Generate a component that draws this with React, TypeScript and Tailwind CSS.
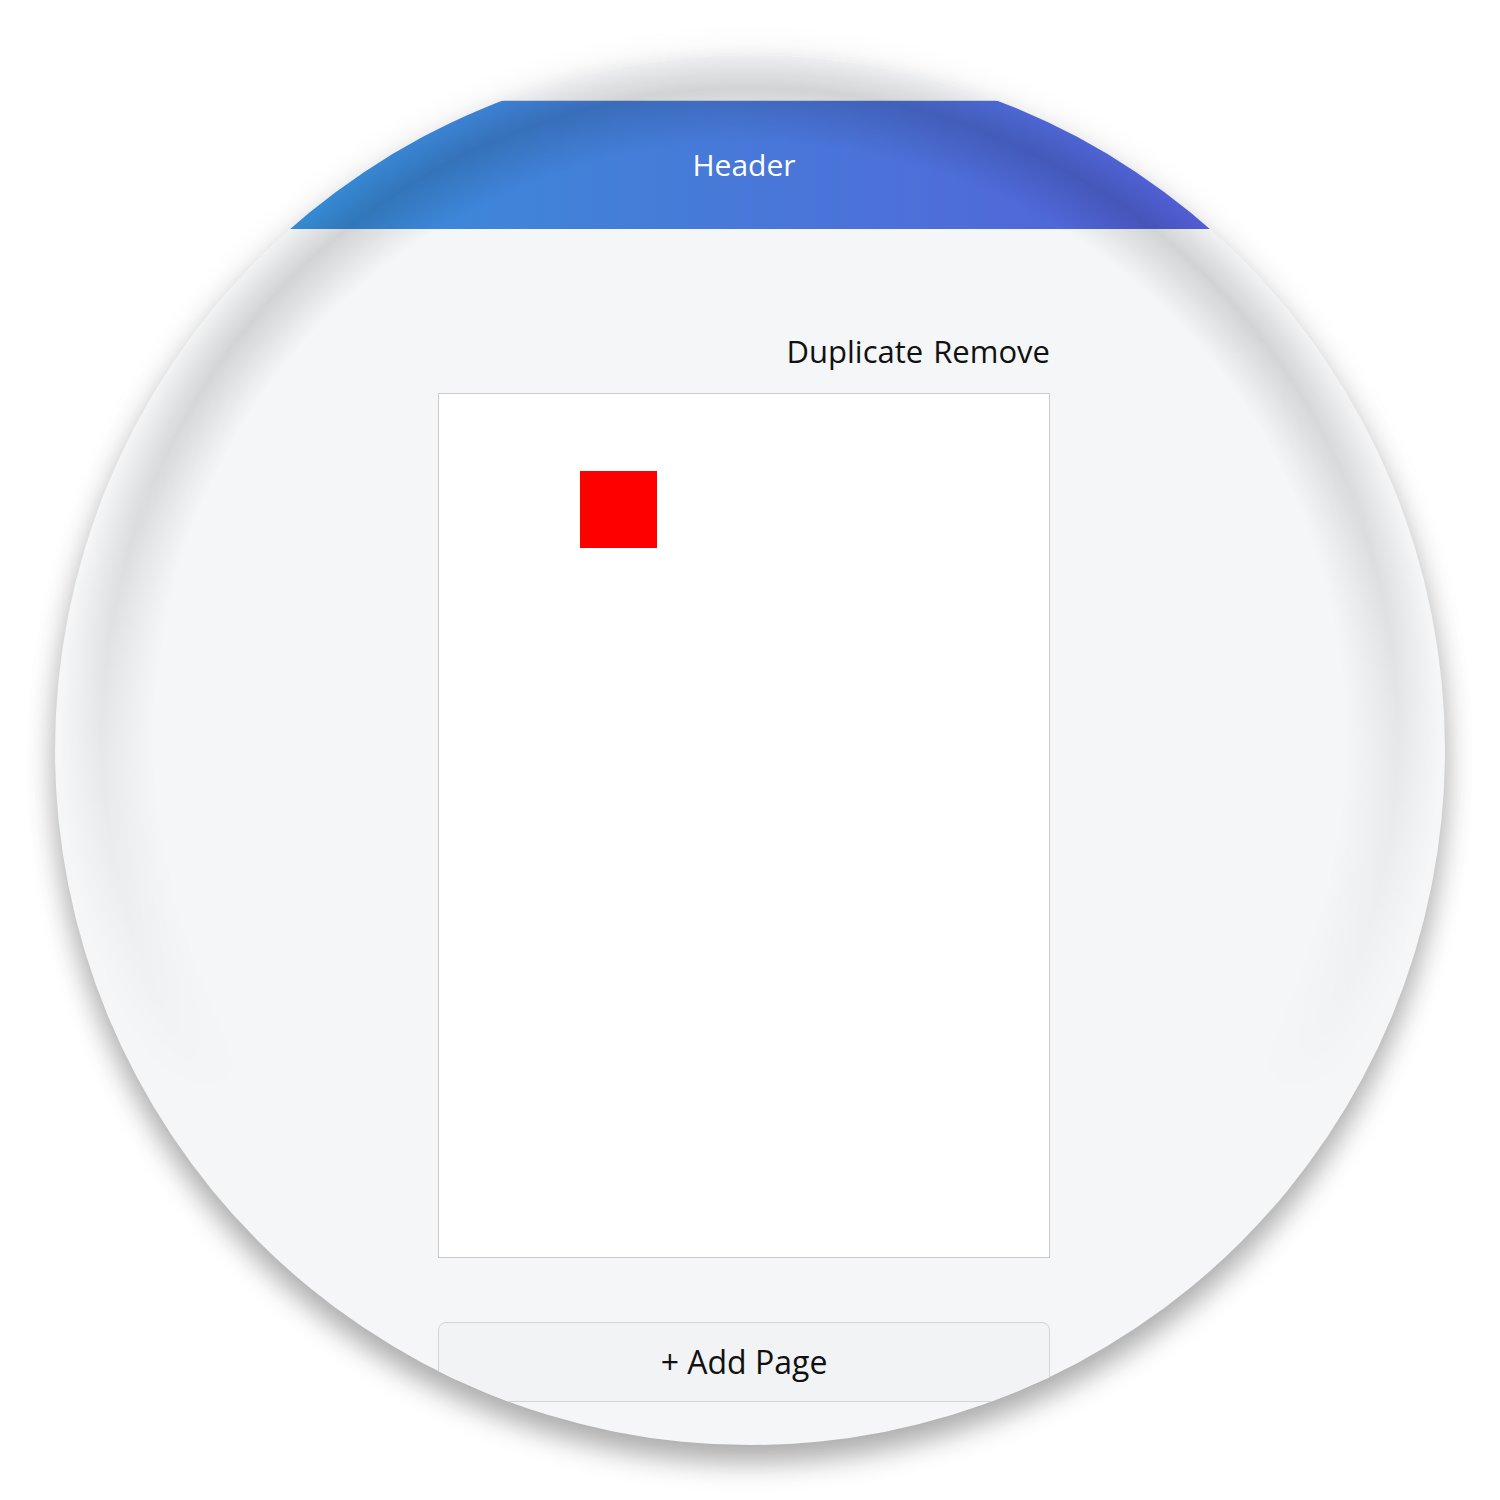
import React from "react";

export default function App() {
  return (
    <div className="w-[1500px] h-[1500px] bg-white pt-[55px] pl-[55px]" style={{ fontFamily: '"Open Sans", "Noto Sans", sans-serif' }}>
      <div className="relative w-[1390px] h-[1390px] rounded-full overflow-hidden bg-[#f5f6f8] shadow-[0_18px_28px_rgba(0,0,0,0.3),0_0_36px_rgba(0,0,0,0.07)]">
        <div className="w-[1378px] pt-[45px] flex flex-col">
          <div className="h-[129px] w-[1390px] bg-gradient-to-r from-[#2699d8] to-[#5752d8] border-t border-[#d6d6d6] flex items-center justify-center">
            <span className="text-white text-[30px] leading-[40px] mr-[12px]">Header</span>
          </div>
          <div className="flex flex-col items-center pt-[102px]">
            <div className="w-[612px] flex flex-col">
              <div className="flex justify-end gap-[10px] h-[40px] mb-[22px] text-[31px] leading-[40px] text-[#111]">
                <button className="leading-[40px]">Duplicate</button>
                <button className="leading-[40px]">Remove</button>
              </div>
              <div className="relative h-[865px] bg-white border border-[#cbcbcb]">
                <div className="absolute left-[141px] top-[77px] w-[77px] h-[77px] bg-[#ff0000]" />
              </div>
              <button className="mt-[64px] h-[80px] rounded-[8px] border border-[#d3d4d6] bg-[#f2f3f5] text-[32px] leading-[40px] text-[#111] flex items-center justify-center">
                + Add Page
              </button>
            </div>
          </div>
        </div>
        <div className="pointer-events-none absolute inset-0 rounded-full bg-[radial-gradient(circle_700px_at_50%_49%,transparent_595px,rgba(0,0,0,0.14)_648px,transparent_690px)] [mask-image:linear-gradient(to_bottom,black_20%,rgba(0,0,0,0.4)_50%,transparent_75%)]" />
      </div>
    </div>
  );
}
